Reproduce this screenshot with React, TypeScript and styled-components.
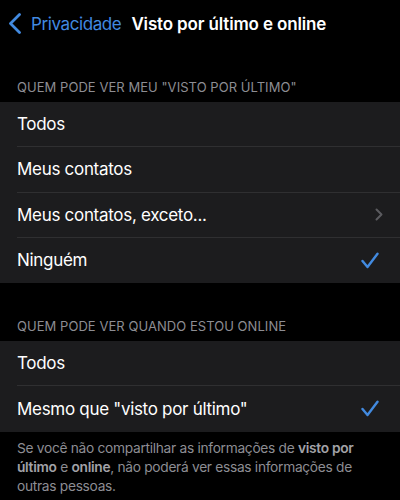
import React from "react";
import styled, { createGlobalStyle } from "styled-components";

const Global = createGlobalStyle`
  html, body { margin: 0; padding: 0; background: #000; }
  body { font-family: Inter, "Noto Sans", sans-serif; -webkit-font-smoothing: antialiased; }
  * { box-sizing: border-box; }
`;

const Page = styled.div`
  width: 400px;
  min-height: 500px;
  background: #000;
  color: #fff;
  overflow: hidden;
`;

const NavBar = styled.div`
  height: 44px;
  padding-top: 3px;
  display: flex;
  align-items: center;
  padding-left: 9px;
`;

const BackButton = styled.div`
  display: flex;
  align-items: center;
  color: #428ae0;
  font-size: 17px;
  letter-spacing: -0.4px;
`;

const BackLabel = styled.span`
  margin-left: 10px;
`;

const Title = styled.div`
  margin-left: 10px;
  font-size: 17px;
  font-weight: 600;
  letter-spacing: -0.15px;
`;

const SectionHeader = styled.div`
  padding: 35px 17px 7px;
  font-size: 13px;
  line-height: 16px;
  color: #8d8d93;
  text-transform: uppercase;
  letter-spacing: 0.05px;
`;

const Group = styled.div`
  background: #1c1c1e;
`;

const Row = styled.div`
  padding-left: 17px;
`;

const RowInner = styled.div<{ $last?: boolean }>`
  height: 45.25px;
  display: flex;
  align-items: center;
  justify-content: space-between;
  padding-right: 17px;
  font-size: 17px;
  letter-spacing: -0.3px;
  border-bottom: ${(p) => (p.$last ? "none" : "1px solid #2f2f31")};
`;

const CheckWrap = styled.span`
  display: flex;
  margin-right: 4px;
`;

const Footer = styled.div`
  padding: 7px 17px 0;
  font-size: 13.75px;
  line-height: 19px;
  color: #8d8d93;
  letter-spacing: -0.3px;
  b { font-weight: 600; color: #a2a2a7; }
`;

const Chevron = () => (
  <svg width="8" height="13" viewBox="0 0 8 13">
    <path d="M1.5 1.5 L6.5 6.5 L1.5 11.5" fill="none" stroke="#5b5b5f" strokeWidth="2" strokeLinecap="round" strokeLinejoin="round" />
  </svg>
);

const Check = () => (
  <CheckWrap>
    <svg width="18" height="17" viewBox="0 0 18 17">
      <path d="M1.5 9 L6.5 15 L16.5 1.8" fill="none" stroke="#428ae0" strokeWidth="2.4" strokeLinecap="round" strokeLinejoin="round" />
    </svg>
  </CheckWrap>
);

const BackChevron = () => (
  <svg width="12" height="21" viewBox="0 0 12 21">
    <path d="M10.5 1.5 L1.5 10.5 L10.5 19.5" fill="none" stroke="#428ae0" strokeWidth="2.8" strokeLinecap="round" strokeLinejoin="round" />
  </svg>
);

type Item = { label: string; accessory?: "check" | "chevron" };

const SettingsGroup = ({ items }: { items: Item[] }) => (
  <Group>
    {items.map((it, i) => (
      <Row key={it.label}>
        <RowInner $last={i === items.length - 1}>
          <span>{it.label}</span>
          {it.accessory === "check" && <Check />}
          {it.accessory === "chevron" && <Chevron />}
        </RowInner>
      </Row>
    ))}
  </Group>
);

export default function App() {
  return (
    <Page>
      <Global />
      <NavBar>
        <BackButton>
          <BackChevron />
          <BackLabel>Privacidade</BackLabel>
        </BackButton>
        <Title>Visto por último e online</Title>
      </NavBar>
      <SectionHeader>Quem pode ver meu "visto por último"</SectionHeader>
      <SettingsGroup
        items={[
          { label: "Todos" },
          { label: "Meus contatos" },
          { label: "Meus contatos, exceto...", accessory: "chevron" },
          { label: "Ninguém", accessory: "check" },
        ]}
      />
      <SectionHeader>Quem pode ver quando estou online</SectionHeader>
      <SettingsGroup
        items={[
          { label: "Todos" },
          { label: 'Mesmo que "visto por último"', accessory: "check" },
        ]}
      />
      <Footer>
        Se você não compartilhar as informações de <b>visto por</b> <b>último</b> e <b>online</b>, não poderá ver essas informações de outras pessoas.
      </Footer>
    </Page>
  );
}
